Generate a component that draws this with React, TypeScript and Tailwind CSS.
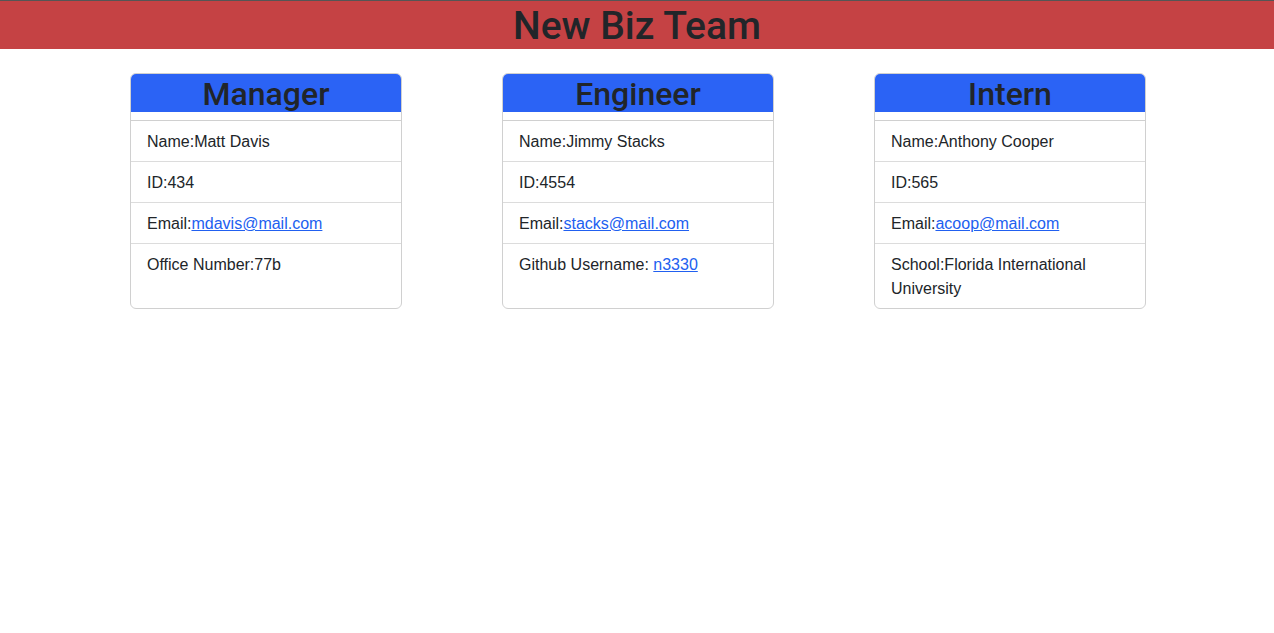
const team = [
  {
    role: "Manager",
    name: "Matt Davis",
    id: "434",
    email: "mdavis@mail.com",
    extra: <>Office Number:77b</>,
  },
  {
    role: "Engineer",
    name: "Jimmy Stacks",
    id: "4554",
    email: "stacks@mail.com",
    extra: (
      <>
        Github Username:{" "}
        <a href="#" className="text-[#2160f0] underline">
          n3330
        </a>
      </>
    ),
  },
  {
    role: "Intern",
    name: "Anthony Cooper",
    id: "565",
    email: "acoop@mail.com",
    extra: <>School:Florida International University</>,
  },
];

export default function App() {
  return (
    <div
      className="min-h-screen bg-white text-[#212529]"
      style={{ fontFamily: '"Helvetica Neue", "Liberation Sans", Arial, sans-serif' }}>
      <header className="border-t border-[#555] bg-[#c54244] h-[49px] flex items-center justify-center">
        <h1 className="font-['Roboto',sans-serif] text-[39px] font-medium leading-none pt-[2px]">
          New Biz Team
        </h1>
      </header>

      <main className="flex justify-center gap-[100px] mt-6 pl-[2px]">
        {team.map((m) => (
          <div
            key={m.role}
            className="w-[272px] flex flex-col border border-[#d0d0d0] rounded-[6px] overflow-hidden">
            <div className="bg-[#2b63f5] h-[38px] flex items-center justify-center">
              <h2 className="font-['Roboto',sans-serif] text-[32px] font-medium leading-none pt-[2px]">
                {m.role}
              </h2>
            </div>
            <div className="h-2" />
            {/* list rows */}
            <ul className="flex flex-col flex-1 border-t border-[#d0d0d0] text-base leading-6">
              <li className="px-4 pt-[9px] pb-[7px] border-b border-[#dcdcdc]">Name:{m.name}</li>
              <li className="px-4 pt-[9px] pb-[7px] border-b border-[#dcdcdc]">ID:{m.id}</li>
              <li className="px-4 pt-[9px] pb-[7px] border-b border-[#dcdcdc]">
                Email:
                <a href="#" className="text-[#2160f0] underline">
                  {m.email}
                </a>
              </li>
              <li className="px-4 pt-[9px] pb-[7px] flex-1 min-h-[64px]">{m.extra}</li>
            </ul>
          </div>
        ))}
      </main>
    </div>
  );
}
